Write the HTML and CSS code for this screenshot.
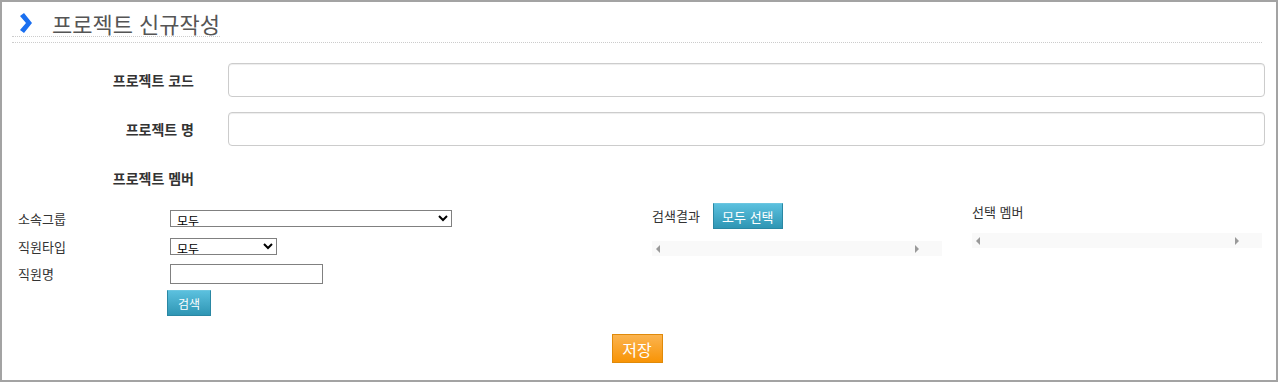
FILE: index.html
```html
<!DOCTYPE html>
<html lang="ko">
<head>
    <meta charset="UTF-8">
    <title>프로젝트 신규작성</title>
    <link rel="stylesheet" href="styles.css">
</head>
<body>

    <div class="page">
        <!-- Title -->
        <div class="page-header">
            <h2 class="page-title">
                <svg class="title-icon" width="14" height="20" viewBox="0 0 14 20">
                    <path d="M2 3 L6 0 L14 10 L6 20 L2 17 L8 10 Z" fill="#1a6ff0"/>
                </svg>
                <span>프로젝트 신규작성</span>
            </h2>
        </div>

        <!-- Project info -->
        <div class="form-row first-row">
            <label class="form-label">프로젝트 코드</label>
            <input type="text" class="form-input">
        </div>
        <div class="form-row">
            <label class="form-label">프로젝트 명</label>
            <input type="text" class="form-input">
        </div>
        <div class="form-row">
            <label class="form-label">프로젝트 멤버</label>
        </div>

        <!-- Member picker -->
        <div class="member">
            <div class="member-search">
                <div class="search-row row-group">
                    <span class="search-label">소속그룹</span>
                    <select class="select-wide"><option>모두</option></select>
                </div>
                <div class="search-row row-type">
                    <span class="search-label">직원타입</span>
                    <select class="select-short"><option>모두</option></select>
                </div>
                <div class="search-row row-name">
                    <span class="search-label">직원명</span>
                    <input type="text" class="name-input">
                </div>
                <button class="btn btn-info btn-search">검색</button>
            </div>

            <div class="member-result">
                <div class="result-head">
                    <span class="small-label">검색결과</span>
                    <button class="btn btn-info btn-all">모두 선택</button>
                </div>
                <div class="scroll-strip"><i class="arrow-left"></i><i class="arrow-right"></i></div>
            </div>

            <div class="member-selected">
                <div class="selected-head small-label">선택 멤버</div>
                <div class="scroll-strip"><i class="arrow-left"></i><i class="arrow-right"></i></div>
            </div>
        </div>

        <div class="actions">
            <button class="btn btn-warning btn-save">저장</button>
        </div>
    </div>

</body>
</html>
```

FILE: styles.css
```css
body {
    margin: 0;
    padding: 0;
    font-family: "Noto Sans CJK KR", "Noto Sans", sans-serif;
    color: #333;
    background-color: #ffffff;
}

.page {
    width: 1278px;
    height: 382px;
    box-sizing: border-box;
    border: 2px solid #a3a3a3;
    padding: 0 11px 0 10px;
}

/* Title */
.page-header {
    display: flex;
    margin-top: 8px;
    padding-bottom: 5px;
    margin-right: 3px;
    border-bottom: 1px dotted #cccccc;
}
.page-title {
    display: flex;
    align-items: center;
    margin: 0;
    padding-left: 6px;
    height: 26px;
    font-size: 22px;
    font-weight: normal;
    line-height: 26px;
    color: #555555;
    border-bottom: 1px dotted #cccccc;
}
.title-icon {
    margin-right: 20px;
}

/* Project info rows */
.form-row {
    display: flex;
    align-items: center;
    height: 34px;
    margin-top: 15px;
}
.form-row.first-row {
    margin-top: 20px;
}
.form-label {
    width: 182px;
    margin-right: 34px;
    text-align: right;
    font-size: 14px;
    font-weight: bold;
    color: #333;
}
.form-input {
    flex-grow: 1;
    height: 34px;
    box-sizing: border-box;
    border: 1px solid #cccccc;
    border-radius: 4px;
    box-shadow: inset 0 1px 1px rgba(0, 0, 0, 0.075);
}

/* Member picker */
.member {
    display: flex;
    margin-top: 8px;
    padding-left: 6px;
}
.member-search {
    width: 634px;
    padding-top: 7px;
}
.search-row {
    display: flex;
    align-items: center;
}
.search-label {
    width: 152px;
    font-size: 13px;
    line-height: 16px;
    color: #333;
}
.row-type {
    margin-top: 11px;
}
.row-name {
    margin-top: 9px;
}
select {
    height: 17px;
    box-sizing: border-box;
    padding: 0 0 0 2px;
    border: 1px solid #808080;
    border-radius: 0;
    font-family: "Noto Sans CJK KR", sans-serif;
    font-size: 12px;
    color: #000;
    background-color: #ffffff;
}
.select-wide {
    width: 282px;
}
.select-short {
    width: 107px;
}
.name-input {
    width: 153px;
    height: 20px;
    box-sizing: border-box;
    border: 1px solid #808080;
}

.btn {
    display: block;
    box-sizing: border-box;
    padding: 0;
    font-family: "Noto Sans CJK KR", sans-serif;
    color: #ffffff;
    cursor: pointer;
}
.btn-info {
    height: 26px;
    font-size: 12px;
    background: linear-gradient(#5bc0de, #2f96b4);
    border: 1px solid #2a87a3;
    border-top-color: #6cc6e0;
}
.btn-warning {
    font-size: 16px;
    background: linear-gradient(#fbb450, #f89406);
    border: 1px solid #e08a0a;
}
.btn-search {
    width: 44px;
    margin-top: 6px;
    margin-left: 149px;
}

.member-result {
    width: 320px;
}
.result-head {
    display: flex;
    align-items: center;
}
.small-label {
    font-size: 13px;
    line-height: 16px;
    color: #333;
}
.btn-all {
    width: 70px;
    margin-left: 13px;
    font-size: 13px;
}
.member-result .scroll-strip {
    margin-top: 12px;
}

.member-selected {
    width: 290px;
}
.selected-head {
    margin-top: 1px;
}
.member-selected .scroll-strip {
    margin-top: 13px;
}

/* Empty horizontal scrollbar */
.scroll-strip {
    display: flex;
    align-items: center;
    justify-content: space-between;
    width: 290px;
    height: 15px;
    box-sizing: border-box;
    padding: 0 23px 0 4px;
    background-color: #f9f9f9;
}
.arrow-left,
.arrow-right {
    width: 0;
    height: 0;
    border-top: 4px solid transparent;
    border-bottom: 4px solid transparent;
}
.arrow-left {
    border-right: 4px solid #9a9a9a;
}
.arrow-right {
    border-left: 4px solid #9a9a9a;
}

/* Save */
.actions {
    display: flex;
    justify-content: center;
    margin-top: 18px;
    padding-right: 3px;
}
.btn-save {
    width: 51px;
    height: 29px;
}
```
